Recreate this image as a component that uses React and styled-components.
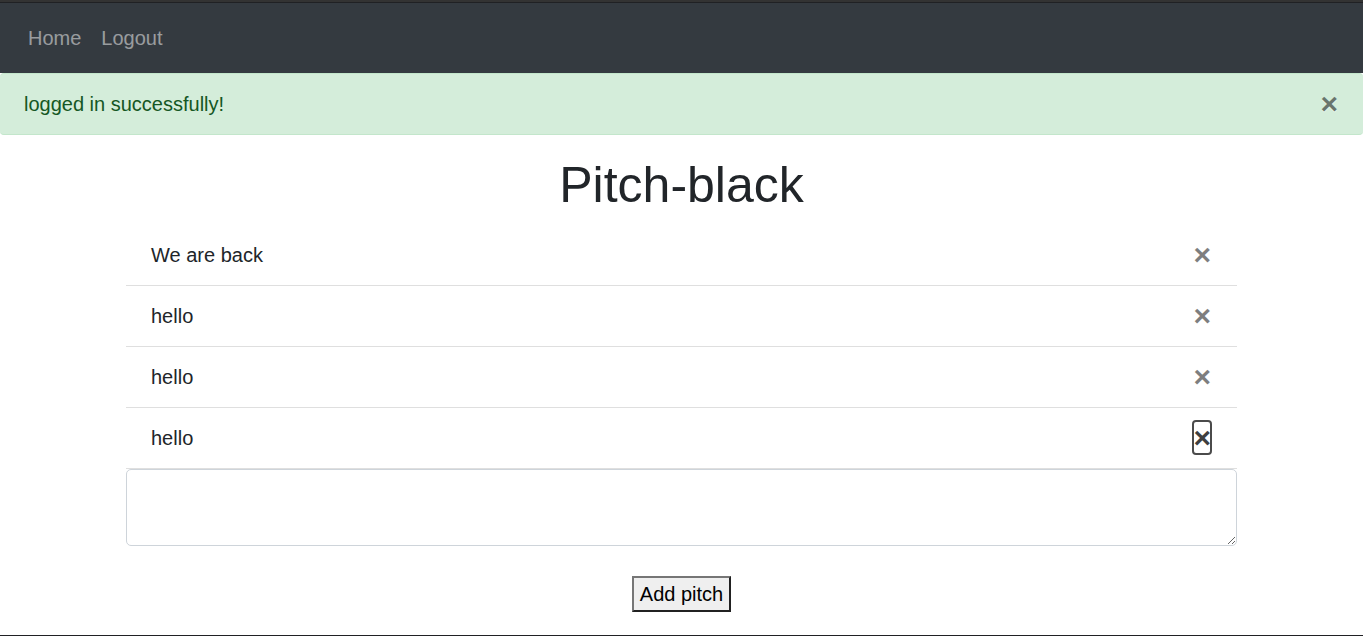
import React, { useState } from "react";
import styled, { createGlobalStyle } from "styled-components";

const GlobalStyle = createGlobalStyle`
  *, *::before, *::after { box-sizing: border-box; }
  body {
    margin: 0;
    background: #ffffff;
    color: #212529;
    font-family: "Liberation Sans", Arial, sans-serif;
    font-size: 20px;
    line-height: 30px;
  }
`;

const Page = styled.div`
  display: flex;
  flex-direction: column;
  min-height: 100vh;
  border-top: 2px solid #333333;
  border-bottom: 1px solid #202124;
`;

const Navbar = styled.nav`
  display: flex;
  border-top: 1px solid #202124;
  background: #343a40;
  padding: 20px 18px;
`;

const NavLink = styled.a`
  padding: 0 10px;
  color: rgba(255, 255, 255, 0.5);
  text-decoration: none;
`;

const Alert = styled.div`
  display: flex;
  justify-content: space-between;
  align-items: center;
  padding: 15px 25px 15px 24px;
  border: solid #c3e6cb;
  border-width: 1px 0;
  border-radius: 4px;
  background: #d4edda;
  color: #155724;
`;

const CloseButton = styled.button`
  margin: -2px 0 -1px;
  padding: 2px 0 1px;
  border: 0;
  background: transparent;
  color: #000000;
  font-family: inherit;
  font-size: 30px;
  font-weight: 700;
  line-height: 30px;
  text-shadow: 0 1px 0 #ffffff;
  opacity: ${({ $active }) => ($active ? 0.75 : 0.5)};
  outline: ${({ $active }) => ($active ? "2px solid #101010" : "none")};
  outline-offset: -1px;
  border-radius: 3px;
`;

const Main = styled.main`
  display: flex;
  flex-direction: column;
  width: 100%;
  max-width: 1111px;
  margin: 20px auto 0;
`;

const Title = styled.h1`
  margin: 0 0 10px;
  font-size: 50px;
  font-weight: 500;
  line-height: 60px;
  text-align: center;
`;

const PitchList = styled.ul`
  margin: 0;
  padding: 0;
  list-style: none;
`;

const Pitch = styled.li`
  display: flex;
  justify-content: space-between;
  align-items: center;
  padding: 15px 26px 15px 25px;
  border-bottom: 1px solid #dfdfdf;
`;

const PitchForm = styled.form`
  display: flex;
  flex-direction: column;
  align-items: center;
  gap: 30px;
  padding-bottom: 23px;
`;

const PitchInput = styled.textarea`
  display: block;
  width: 100%;
  height: 77px;
  padding: 8px 15px;
  border: 1px solid #ced4da;
  border-radius: 5px;
  background: #ffffff;
  color: #495057;
  font: inherit;
  resize: vertical;
`;

const SubmitButton = styled.button`
  padding: 1px 6px;
  border: 2px solid;
  border-color: #767676 #212121 #212121 #767676;
  background: #efefef;
  color: #000000;
  font: inherit;
`;

const pitches = [
  { id: 1, text: "We are back" },
  { id: 2, text: "hello" },
  { id: 3, text: "hello" },
  { id: 4, text: "hello" },
];

export default function App() {
  const [activeId, setActiveId] = useState(4);

  return (
    <>
      <GlobalStyle />
      <Page>
        <Navbar>
          <NavLink href="#home">Home</NavLink>
          <NavLink href="#logout">Logout</NavLink>
        </Navbar>
        <Alert role="alert">
          <span>logged in successfully!</span>
          <CloseButton type="button" aria-label="Close">×</CloseButton>
        </Alert>
        <Main>
          <Title>Pitch-black</Title>
          <PitchList>
            {pitches.map(({ id, text }) => (
              <Pitch key={id}>
                <span>{text}</span>
                <CloseButton
                  type="button"
                  aria-label="Delete pitch"
                  $active={id === activeId}
                  onFocus={() => setActiveId(id)}
                >
                  ×
                </CloseButton>
              </Pitch>
            ))}
          </PitchList>
          <PitchForm onSubmit={(event) => event.preventDefault()}>
            <PitchInput name="pitch" aria-label="New pitch" />
            <SubmitButton type="submit">Add pitch</SubmitButton>
          </PitchForm>
        </Main>
      </Page>
    </>
  );
}
